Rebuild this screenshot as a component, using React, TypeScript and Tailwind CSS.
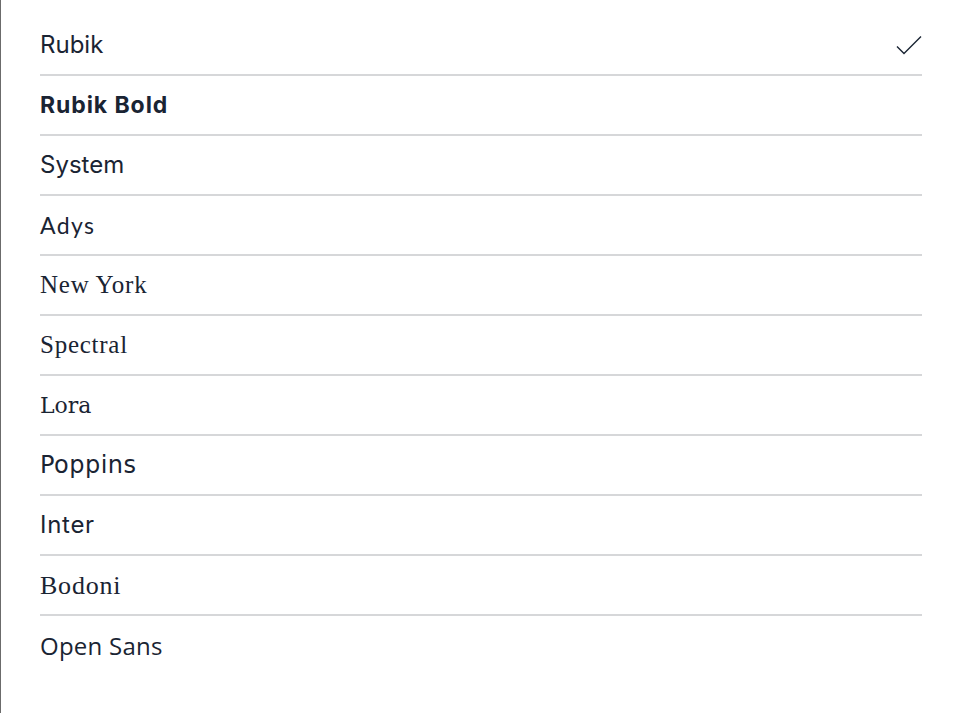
import React, { useState } from 'react';

interface FontOption {
  name: string;
  className: string;
}

const fonts: FontOption[] = [
  { name: 'Rubik', className: "font-['Inter',sans-serif] font-normal text-[24px]" },
  { name: 'Rubik Bold', className: "font-['Inter',sans-serif] font-bold text-[23px] tracking-[0.04em]" },
  { name: 'System', className: "font-['Inter',sans-serif] text-[24px]" },
  { name: 'Adys', className: "font-['Lato',sans-serif] text-[23px] tracking-[0.06em]" },
  { name: 'New York', className: "font-['Liberation_Serif',serif] text-[25px] tracking-[0.03em]" },
  { name: 'Spectral', className: "font-['Liberation_Serif',serif] text-[25px] tracking-[0.03em]" },
  { name: 'Lora', className: "font-['DejaVu_Serif',serif] text-[22px]" },
  { name: 'Poppins', className: "font-['DejaVu_Sans',sans-serif] text-[24px] tracking-[0.02em]" },
  { name: 'Inter', className: "font-['Inter',sans-serif] text-[24px] tracking-[0.03em]" },
  { name: 'Bodoni', className: "font-['Liberation_Serif',serif] text-[26px] tracking-[0.03em]" },
  { name: 'Open Sans', className: "font-['Open_Sans',sans-serif] text-[24px] tracking-[0.01em]" },
];

function CheckIcon() {
  return (
    <svg width="26" height="20" viewBox="0 0 26 20" fill="none">
      <path d="M1 11.5 L8 18.5 L25 1.5" stroke="#1a2433" strokeWidth="1.4" />
    </svg>
  );
}

export default function App() {
  const [selected, setSelected] = useState('Rubik');

  return (
    <div className="w-[960px] h-[713px] bg-white border-l border-[#6b6b6b] overflow-hidden">
      <ul className="pl-[39px] pr-[38px] pt-[16px]">
        {fonts.map((font, i) => (
          <li
            key={font.name}
            onClick={() => setSelected(font.name)}
            className={`h-[60px] flex items-center justify-between text-[#1a2433] cursor-pointer ${
              i < fonts.length - 1 ? 'border-b-2 border-[#d6d7d9]' : ''
            }`}
          >
            <span className={font.className}>{font.name}</span>
            {selected === font.name && <CheckIcon />}
          </li>
        ))}
      </ul>
    </div>
  );
}
